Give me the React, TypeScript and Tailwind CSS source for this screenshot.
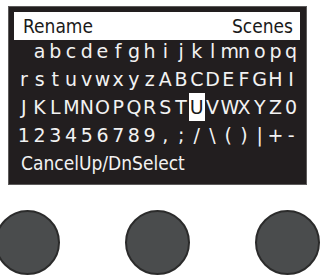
import React from 'react';

const rows: string[] = [
  ' abcdefghijklmnopq',
  'rstuvwxyzABCDEFGHI',
  'JKLMNOPQRSTUVWXYZ0',
  '123456789,;/\\()|+-',
];

const App: React.FC = () => {
  return (
    <div className="w-[325px] h-[278px] bg-white overflow-hidden">
      {/* Display */}
      <div className="ml-[8px] mt-[6px] w-[299px] h-[179px] bg-[#221e1f] border border-[#5c5a5a] px-[5px] pt-[5px]">
        <div className="flex items-center justify-between h-[28px] w-[286px] bg-white pl-[9px] pr-[7px] text-[19px] text-[#1a1a1a] font-['DejaVu_Sans_Condensed',sans-serif] leading-none">
          <span>Rename</span>
          <span>Scenes</span>
        </div>
        <div className="-mt-[3px] ml-[2px] text-[#f2f2f2]">
          {rows.map((row, r) => (
            <div key={r} className="grid grid-cols-18 w-[283px] h-[28px] text-[19px] leading-[28px] font-['DejaVu_Sans',sans-serif]">
              {row.split('').map((ch, i) => {
                const sel = r === 2 && i === 11;
                return (
                  <span
                    key={i}
                    className={`text-center ${sel ? 'bg-white text-[#1a1a1a]' : ''}`}
                  >
                    {ch === ' ' ? '\u00a0' : ch}
                  </span>
                );
              })}
            </div>
          ))}
          <div className="h-[28px] leading-[28px] text-[19px] pl-[5px] font-['DejaVu_Sans_Condensed',sans-serif]">
            CancelUp/DnSelect
          </div>
        </div>
      </div>

      {/* Knobs */}
      <div className="flex gap-[65px] ml-[-5px] mt-[25px]">
        <div className="w-[65px] h-[65px] rounded-full bg-[#4a4c4d] border-2 border-[#2b2b2b] shrink-0" />
        <div className="w-[65px] h-[65px] rounded-full bg-[#4a4c4d] border-2 border-[#2b2b2b] shrink-0" />
        <div className="w-[65px] h-[65px] rounded-full bg-[#4a4c4d] border-2 border-[#2b2b2b] shrink-0" />
      </div>
    </div>
  );
};

export default App;
